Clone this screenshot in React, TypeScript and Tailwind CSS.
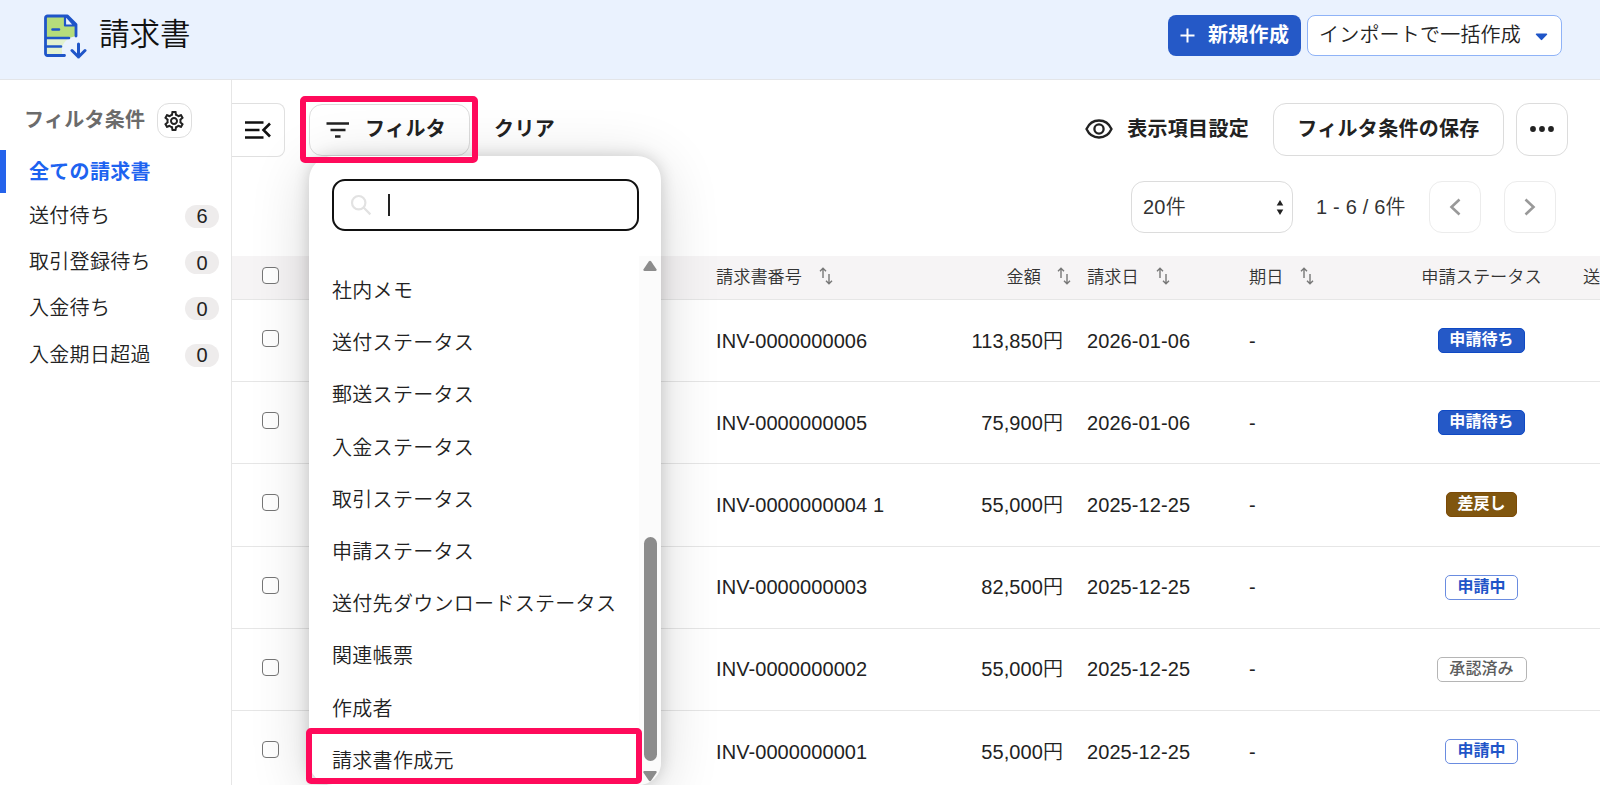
import React from "react";

const sidebarItems = [
  { label: "送付待ち", count: 6 },
  { label: "取引登録待ち", count: 0 },
  { label: "入金待ち", count: 0 },
  { label: "入金期日超過", count: 0 },
];

const filterOptions = [
  "社内メモ",
  "送付ステータス",
  "郵送ステータス",
  "入金ステータス",
  "取引ステータス",
  "申請ステータス",
  "送付先ダウンロードステータス",
  "関連帳票",
  "作成者",
  "請求書作成元",
];

type Status = "waiting" | "returned" | "pending" | "approved";

const statusStyles: Record<Status, { label: string; className: string }> = {
  waiting: { label: "申請待ち", className: "w-[87px] border-[#0f49c4] bg-[#2559c7] font-bold text-white" },
  returned: { label: "差戻し", className: "w-[71px] border-[#7c4a06] bg-[#80560f] font-bold text-white" },
  pending: { label: "申請中", className: "w-[73px] border-[#6a8ce0] bg-white font-bold text-[#1f55c8]" },
  approved: { label: "承認済み", className: "w-[90px] border-[#b5b5b5] bg-white font-medium text-[#5c5c5c]" },
};

const invoices: { no: string; amount: string; date: string; status: Status }[] = [
  { no: "INV-0000000006", amount: "113,850円", date: "2026-01-06", status: "waiting" },
  { no: "INV-0000000005", amount: "75,900円", date: "2026-01-06", status: "waiting" },
  { no: "INV-0000000004 1", amount: "55,000円", date: "2025-12-25", status: "returned" },
  { no: "INV-0000000003", amount: "82,500円", date: "2025-12-25", status: "pending" },
  { no: "INV-0000000002", amount: "55,000円", date: "2025-12-25", status: "approved" },
  { no: "INV-0000000001", amount: "55,000円", date: "2025-12-25", status: "pending" },
];

const columns = "grid grid-cols-[484px_242px_105px_24px_162px_120px_225px_1fr]";

function DocumentIcon() {
  return (
    <svg width="44" height="46" viewBox="0 0 44 46" fill="none" className="shrink-0">
      <path d="M3 2.500h21l9 9V22l-7 2H3z" fill="#b5dc7b" />
      <path d="M3 24h25c-5 1-9 6-9 12v5H3z" fill="#e2f1cf" />
      <path d="M21.500 41.500H4.500a2 2 0 0 1-2-2V4a2 2 0 0 1 2-2h20l8.500 8.500v11.500" stroke="#1f55c8" strokeWidth="2.800" strokeLinecap="round" strokeLinejoin="round" />
      <path d="M22 3v8.500h9.500L24 3z" fill="#eaf2fe" stroke="#1f55c8" strokeWidth="2.200" strokeLinejoin="round" />
      <path d="M9.500 15.500h6.500M3 24h23M3 32.500h15" stroke="#1f55c8" strokeWidth="2.600" strokeLinecap="round" />
      <path d="M35.500 30v13M29 36.500l6.500 6.500 6.500-6.500" stroke="#1f55c8" strokeWidth="3" strokeLinecap="round" strokeLinejoin="round" />
    </svg>
  );
}

function GearIcon() {
  return (
    <svg width="20" height="20" viewBox="2 2 20 20" fill="#222" className="-ml-px shrink-0">
      <path d="M19.430 12.980c.04-.32.07-.64.07-.98 0-.34-.03-.66-.07-.98l2.110-1.650c.19-.15.24-.42.12-.64l-2-3.460c-.09-.16-.26-.25-.44-.25-.06 0-.12.010-.17.030l-2.490 1c-.52-.4-1.080-.73-1.690-.98l-.38-2.650C14.460 2.180 14.250 2 14 2h-4c-.25 0-.46.18-.49.42l-.38 2.650c-.61.25-1.170.59-1.690.98l-2.490-1c-.06-.02-.12-.03-.18-.03-.17 0-.34.09-.43.25l-2 3.460c-.13.22-.07.49.12.64l2.110 1.650c-.04.32-.07.65-.07.98 0 .33.030.66.070.98l-2.110 1.650c-.19.15-.24.42-.12.64l2 3.460c.09.16.26.25.44.25.06 0 .12-.01.17-.03l2.490-1c.52.4 1.080.73 1.690.98l.38 2.650c.03.24.24.42.49.42h4c.25 0 .46-.18.49-.42l.38-2.650c.61-.25 1.170-.59 1.690-.98l2.490 1c.06.020.12.030.18.030.17 0 .34-.09.43-.25l2-3.460c.12-.22.07-.49-.12-.64l-2.110-1.650zm-1.980-1.710c.04.31.05.52.05.73 0 .21-.02.43-.05.73l-.14 1.130.89.7 1.080.84-.7 1.210-1.270-.51-1.040-.42-.9.68c-.43.32-.84.56-1.250.73l-1.060.43-.16 1.130-.2 1.350h-1.400l-.19-1.350-.16-1.130-1.060-.43c-.43-.18-.83-.41-1.230-.71l-.91-.7-1.060.43-1.270.51-.7-1.210 1.080-.84.89-.7-.14-1.130c-.03-.31-.05-.54-.05-.74s.02-.43.05-.73l.14-1.130-.89-.7-1.080-.84.7-1.210 1.270.51 1.040.42.9-.68c.43-.32.84-.56 1.250-.73l1.060-.43.16-1.130.2-1.350h1.390l.19 1.350.16 1.130 1.060.43c.43.18.83.41 1.230.71l.91.7 1.060-.43 1.270-.51.7 1.210-1.070.85-.89.7.14 1.130zM12 8c-2.210 0-4 1.790-4 4s1.790 4 4 4 4-1.790 4-4-1.790-4-4-4zm0 6c-1.100 0-2-.9-2-2s.9-2 2-2 2 .9 2 2-.9 2-2 2z" />
    </svg>
  );
}

function SortIcon() {
  return (
    <svg width="14" height="18" viewBox="0 0 14 18" fill="none" stroke="#777" strokeWidth="1.400" className="-mt-[3px] shrink-0">
      <path d="M4 11V1.500M1 4.300l3-3 3 3" />
      <path d="M10 7v9.500M7 13.700l3 3 3-3" />
    </svg>
  );
}

function Checkbox() {
  return <span className="block size-[17px] rounded-[4px] border-[1.5px] border-[#767676] bg-white" />;
}

function Header() {
  return (
    <header className="flex h-20 shrink-0 items-start border-b border-[#e3e5e8] bg-[#eaf2fe] pl-[43px] pr-[38px] pt-[14px]">
      <DocumentIcon />
      <h1 className="ml-3 text-[30.500px] font-[350] leading-[41px] text-[#111]">請求書</h1>
      <div className="ml-auto flex gap-1.5 pt-px">
        <button className="flex h-[41px] w-[133px] items-center rounded-lg bg-[#2559c7] pl-3 text-[20px] font-bold text-white">
          <svg width="15" height="15" viewBox="0 0 15 15" stroke="#fff" strokeWidth="2">
            <path d="M7.500 0.500v14M0.500 7.500h14" />
          </svg>
          <span className="-mt-px ml-[13px] whitespace-nowrap leading-6 tracking-[0.3px]">新規作成</span>
        </button>
        <button className="flex h-[41px] w-[255px] items-center rounded-lg border border-[#8fb3f7] bg-white pl-[11px] text-[20px] font-[350] text-[#222]">
          <span className="-mt-px whitespace-nowrap leading-6 tracking-[0.2px]">インポートで一括作成</span>
          <svg width="13" height="8" viewBox="0 0 13 8" fill="#1f55c8" className="ml-[14px] mt-0.5">
            <path d="M1.500 0.500h10a0.700 0.700 0 0 1 .5 1.200L7.200 6.800a1 1 0 0 1-1.400 0L1 1.700a0.700 0.700 0 0 1 .5-1.200z" />
          </svg>
        </button>
      </div>
    </header>
  );
}

function Sidebar() {
  return (
    <aside className="flex w-[232px] shrink-0 flex-col border-r border-[#e6e6e6] pt-[23px]">
      <div className="flex h-[35px] items-center pl-6">
        <span className="-mt-px w-[133px] whitespace-nowrap text-[20px] font-bold leading-6 tracking-[0.3px] text-[#6b6b6b]">フィルタ条件</span>
        <button className="flex size-[35px] items-center justify-center rounded-xl border border-[#dedede] bg-white">
          <GearIcon />
        </button>
      </div>
      <div className="mt-3 flex h-[43px] items-center border-l-[6px] border-[#2563eb] pl-[23px] text-[20px] font-bold leading-6 tracking-[0.3px] text-[#1d63f0]">
        全ての請求書
      </div>
      <ul className="flex flex-col">
        {sidebarItems.map((item) => (
          <li key={item.label} className="flex h-[46.400px] items-center justify-between pl-[29px] pr-3 text-[20px] font-[350] text-[#222]">
            <span className="-mt-px leading-6 tracking-[0.3px]">{item.label}</span>
            <span className="flex h-[23px] w-[34px] items-center justify-center rounded-full bg-[#eeecec] leading-none">{item.count}</span>
          </li>
        ))}
      </ul>
    </aside>
  );
}

function FilterMenu() {
  return (
    <div className="absolute left-[77px] top-[76px] h-[629px] w-[352px] rounded-3xl bg-white pt-[23px] shadow-[0_10px_60px_rgba(0,0,0,0.16),0_0_16px_rgba(0,0,0,0.16)]">
      <div className="ml-[23px] flex h-[52px] w-[307px] items-center rounded-[13px] border-[2.5px] border-[#111] pl-4">
        <svg width="22" height="22" viewBox="0 0 24 24" fill="none" stroke="#e2e2e2" strokeWidth="2.400">
          <circle cx="9.500" cy="9.500" r="7.300" />
          <path d="M14.800 14.800l7.400 7.400" />
        </svg>
        <span className="ml-4 h-[22px] w-[2px] bg-[#222]" />
      </div>
      <div className="mt-[25px] flex h-[529px]">
        <ul className="flex-1 pl-[23px] pt-[9px]">
          {filterOptions.map((label) => (
            <li key={label} className="flex h-[52.200px] items-center whitespace-nowrap text-[20px] font-[350] leading-6 tracking-[0.3px] text-[#222]">
              {label}
            </li>
          ))}
        </ul>
        <div className="flex w-[22px] flex-col items-center rounded-br-3xl bg-[#fbfbfb] pt-[4px]">
          <svg width="14" height="12" viewBox="0 0 14 12" fill="#8c8c8c">
            <path d="M5.800 1.600a1.500 1.500 0 0 1 2.400 0l5.300 7.600c.5.8 0 1.800-.9 1.800H1.400C.5 11 0 10 .5 9.200z" />
          </svg>
          <span className="mt-[265px] h-[224px] w-[13px] rounded-full bg-[#8c8c8c]" />
          <svg width="14" height="12" viewBox="0 0 14 12" fill="#8c8c8c" className="mt-[9px]">
            <path d="M5.800 10.400a1.500 1.500 0 0 0 2.400 0l5.300-7.600C14 2 13.500 1 12.600 1H1.400C.5 1 0 2 .5 2.800z" />
          </svg>
        </div>
      </div>
      <div className="absolute -left-[3px] top-[572px] h-[56px] w-[336px] rounded-[5px] border-[6px] border-[#ff0a5b]" />
    </div>
  );
}

function Toolbar() {
  return (
    <div className="flex h-[54px] items-center text-[20px] font-bold text-[#222]">
      <button className="flex h-[54px] w-[53px] items-center justify-center rounded-r-lg border border-l-0 border-[#e0e0e0] bg-white">
        <svg width="28" height="20" viewBox="0 0 28 20" fill="none" stroke="#111" strokeWidth="2.600">
          <path d="M1 2.500h18.500M1 10h14.500M1 17.500h18.500M26 3.500L19.500 10l6.500 6.500" />
        </svg>
      </button>
      <button className="ml-[24px] flex h-[52px] w-[161px] items-center rounded-[13px] border border-[#dcdcdc] bg-white pl-4">
        <svg width="24" height="16" viewBox="0 0 24 16" fill="none" stroke="#222" strokeWidth="2.300">
          <path d="M0.500 1.500h22.500M4.500 8h15M9 14.500h5.500" />
        </svg>
        <span className="-mt-0.5 ml-[15px] whitespace-nowrap leading-6 tracking-[0.4px]">フィルタ</span>
      </button>
      <span className="-mt-0.5 ml-[24px] whitespace-nowrap leading-6 tracking-[0.4px]">クリア</span>
      <div className="-mt-0.5 ml-auto flex items-center">
        <svg width="28" height="20" viewBox="0 0 28 20" fill="none" stroke="#222" strokeWidth="2.300">
          <path d="M1.500 10C4 4.500 8.700 1.500 14 1.500S24 4.500 26.500 10C24 15.500 19.300 18.500 14 18.500S4 15.500 1.500 10z" />
          <circle cx="14" cy="10" r="4.600" />
        </svg>
        <span className="ml-[14px] whitespace-nowrap leading-6 tracking-[0.3px]">表示項目設定</span>
        <button className="ml-6 flex h-[53px] w-[231px] items-center justify-center whitespace-nowrap rounded-[13px] border border-[#dcdcdc] bg-white leading-6 tracking-[0.3px]">
          フィルタ条件の保存
        </button>
        <button className="ml-3 mr-8 flex h-[53px] w-[52px] items-center justify-center rounded-[13px] border border-[#dcdcdc] bg-white">
          <svg width="24" height="6" viewBox="0 0 24 6" fill="#222">
            <circle cx="3" cy="3" r="2.900" />
            <circle cx="12" cy="3" r="2.900" />
            <circle cx="21" cy="3" r="2.900" />
          </svg>
        </button>
      </div>
    </div>
  );
}

function Pagination() {
  return (
    <div className="mt-6 flex h-[52px] items-center justify-end pr-[44px] text-[20px] font-[350] text-[#333]">
      <div className="flex h-[52px] w-[162px] items-center justify-between rounded-[13px] border border-[#dcdcdc] pl-[11px] pr-2">
        <span className="-mt-px leading-6 tracking-[0.2px]">20件</span>
        <svg width="8" height="15" viewBox="0 0 8 15" fill="#222">
          <path d="M4 0l3.300 5.500H.7zM4 15l3.300-5.500H.7z" />
        </svg>
      </div>
      <span className="-mt-px ml-[23px] w-[113px] whitespace-nowrap leading-6 tracking-[0.2px]">1 - 6 / 6件</span>
      <button className="flex size-[52px] items-center justify-center rounded-[13px] border border-[#ececec]">
        <svg width="12" height="18" viewBox="0 0 12 18" fill="none" stroke="#999" strokeWidth="2.600">
          <path d="M10.500 1.500L2.500 9l8 7.500" />
        </svg>
      </button>
      <button className="ml-[23px] flex size-[52px] items-center justify-center rounded-[13px] border border-[#ececec]">
        <svg width="12" height="18" viewBox="0 0 12 18" fill="none" stroke="#999" strokeWidth="2.600">
          <path d="M1.500 1.500l8 7.500-8 7.500" />
        </svg>
      </button>
    </div>
  );
}

function InvoiceTable() {
  return (
    <div className="mt-[23px]">
      <div className={`${columns} h-[44px] items-center border-b border-[#e6e6e6] bg-[#f6f4f5] text-[17.200px] font-[350] leading-6 text-[#333]`}>
        <div className="-mt-1 pl-[30px]"><Checkbox /></div>
        <div className="-mt-px flex items-center gap-[17px]">請求書番号<SortIcon /></div>
        <div className="-mt-px flex items-center justify-end gap-[16px] whitespace-nowrap">
          <span className="pl-4">金額</span>
          <span className="-mr-[8px]"><SortIcon /></span>
        </div>
        <div />
        <div className="-mt-px flex items-center gap-[17px]">請求日<SortIcon /></div>
        <div className="-mt-px flex items-center gap-[17px]">期日<SortIcon /></div>
        <div className="-mt-px whitespace-nowrap text-center">申請ステータス</div>
        <div className="-mt-px -ml-[11px] overflow-hidden whitespace-nowrap">送</div>
      </div>
      {invoices.map((row) => (
        <div key={row.no} className={`${columns} h-[82.200px] items-center border-b border-[#e6e6e6] text-[20px] font-[350] leading-6 tracking-[0.08px] text-[#222]`}>
          <div className="-mt-1 pl-[30px]"><Checkbox /></div>
          <div>{row.no}</div>
          <div className="whitespace-nowrap text-right">{row.amount}</div>
          <div />
          <div>{row.date}</div>
          <div>-</div>
          <div className="flex justify-center">
            <span className={`flex h-[25px] items-center justify-center whitespace-nowrap rounded-[5px] border pb-px text-[16px] leading-5 ${statusStyles[row.status].className}`}>
              {statusStyles[row.status].label}
            </span>
          </div>
        </div>
      ))}
    </div>
  );
}

export default function App() {
  return (
    <div className="flex h-[785px] w-[1600px] flex-col overflow-hidden bg-white font-['Liberation_Sans','Noto_Sans_CJK_JP',sans-serif]">
      <Header />
      <div className="flex min-h-0 flex-1">
        <Sidebar />
        <main className="relative min-w-0 flex-1 overflow-hidden pt-[23px]">
          <Toolbar />
          <Pagination />
          <InvoiceTable />
          <FilterMenu />
          <div className="absolute left-[68px] top-[16px] h-[67px] w-[178px] rounded-[5px] border-[6px] border-[#ff0a5b]" />
        </main>
      </div>
    </div>
  );
}
